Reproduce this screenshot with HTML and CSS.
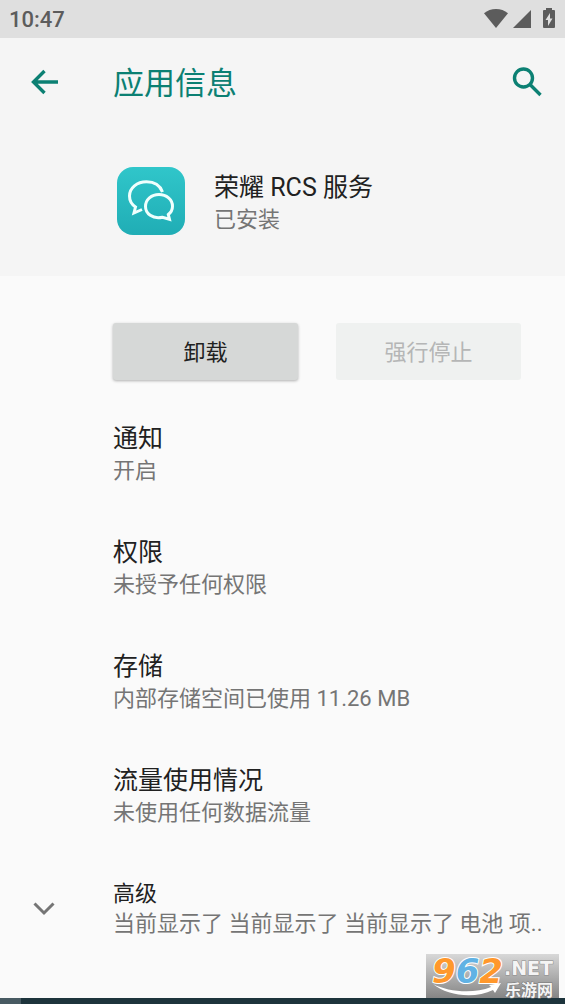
FILE: index.html
```html
<!DOCTYPE html>
<html lang="zh-CN">
<head>
<meta charset="utf-8">
<meta name="viewport" content="width=device-width, initial-scale=1">
<title>应用信息</title>
<link rel="stylesheet" href="styles.css">
</head>
<body>
<div class="status-bar">
  <span class="clock">10:47</span>
  <div class="status-icons">
    <svg width="24" height="20" viewBox="0 0 24 20" aria-hidden="true"><path d="M0 4.2C3.400 1.600 7.500 0 12 0s8.600 1.600 12 4.200L12 19z"/></svg>
    <svg width="18" height="18" viewBox="0 0 18 18" aria-hidden="true"><path d="M18 0v18H0z"/></svg>
    <svg class="battery" width="12" height="20" viewBox="0 0 12 20" aria-hidden="true"><path fill-rule="evenodd" d="M3 0h6v2h2q1 0 1 1v16q0 1-1 1H1q-1 0-1-1V3q0-1 1-1h2zM7 5L2.500 12H5v6L9.500 10.500H7z"/></svg>
  </div>
</div>
<header class="header">
  <div class="toolbar">
    <button class="icon-button" type="button" aria-label="返回">
      <svg width="28" height="26" viewBox="0 0 28 26" aria-hidden="true"><path d="M27 13H3M13.500 2L2.500 13l11 11"/></svg>
    </button>
    <h1 class="toolbar-title">应用信息</h1>
    <button class="icon-button" type="button" aria-label="搜索">
      <svg width="30" height="30" viewBox="0 0 30 30" aria-hidden="true"><circle cx="11.500" cy="11" r="9"/><path d="M18 17.500L28.500 28"/></svg>
    </button>
  </div>
  <div class="app">
    <svg class="app-icon" width="68" height="68" viewBox="0 0 68 68" aria-hidden="true">
      <defs><linearGradient id="teal" x1="0" y1="0" x2="0" y2="1"><stop offset="0" stop-color="#30c6ca"/><stop offset="1" stop-color="#20adb5"/></linearGradient></defs>
      <rect width="68" height="68" rx="16" fill="url(#teal)"/>
      <g fill="none" stroke="#f0fffd" stroke-width="3" stroke-linejoin="miter">
        <path d="M45.500 25C43 18.500 37 14.800 29.500 14.800C20 14.800 12.500 21 12.500 29C12.500 33.500 14.800 37.500 18.500 40L17 46L25 42.500"/>
        <path d="M52.500 52.300L45.500 50.200C35.500 52.500 28.500 46.500 28.500 39.500C28.500 32.500 34.500 27.500 42 27.500C49.500 27.500 55.500 32.500 55.500 39.200C55.500 42.500 54 45.400 51.300 47.500Z"/>
      </g>
    </svg>
    <div class="app-text">
      <h2 class="title">荣耀 RCS 服务</h2>
      <p class="summary">已安装</p>
    </div>
  </div>
</header>
<main class="content">
  <div class="actions">
    <button class="action" type="button">卸载</button>
    <button class="action" type="button" disabled>强行停止</button>
  </div>
  <ul class="list">
    <li class="item"><h2 class="title">通知</h2><p class="summary">开启</p></li>
    <li class="item"><h2 class="title">权限</h2><p class="summary">未授予任何权限</p></li>
    <li class="item"><h2 class="title">存储</h2><p class="summary">内部存储空间已使用 11.26 MB</p></li>
    <li class="item"><h2 class="title">流量使用情况</h2><p class="summary">未使用任何数据流量</p></li>
    <li class="item advanced">
      <svg class="chevron" width="22" height="14" viewBox="0 0 22 14" aria-hidden="true"><path d="M1.500 1.500L11 11l9.500-9.500"/></svg>
      <div class="advanced-text"><h2 class="title small">高级</h2><p class="summary">当前显示了 当前显示了 当前显示了 电池 项..</p></div>
    </li>
  </ul>
</main>
<footer class="strip"><div class="strip-start"></div></footer>
<div class="watermark">
  <span class="mark-number">9<span class="blue">6</span>2</span>
  <span class="mark-net">.NET</span>
  <span class="mark-name">乐游网</span>
  <svg class="swoosh" width="70" height="14" viewBox="0 0 70 14" aria-hidden="true"><path d="M1 1C16 9 42 11 59 4L57 2L69 0L63 10L61 7C43 16 15 13 1 1z"/></svg>
</div>
</body>
</html>
```

FILE: styles.css
```css
* { box-sizing: border-box; }
body {
  margin: 0;
  min-height: 100vh;
  display: flex;
  flex-direction: column;
  position: relative;
  background: #fafafa;
  color: #212121;
  font-family: Roboto, "Noto Sans CJK SC", sans-serif;
}
h1, h2, p, ul { margin: 0; padding: 0; font-weight: 400; }
ul { list-style: none; }
button { font: inherit; border: 0; padding: 0; }
svg { display: block; flex: none; }

.status-bar {
  display: flex;
  align-items: center;
  justify-content: space-between;
  height: 38px;
  padding: 0 10px 0 9px;
  background: #dfdfdf;
  color: #5c5c5c;
}
.clock { font-size: 22px; font-weight: 500; }
.status-icons { display: flex; align-items: center; gap: 5px; fill: #5c5c5c; }
.battery { margin: 0 0 2px 7px; }

.header { background: #f5f5f5; padding-bottom: 41px; }
.toolbar {
  display: flex;
  align-items: center;
  height: 87px;
  padding: 0 23px 0 31px;
  color: #0c8073;
}
.toolbar-title { flex: 1; padding: 0 0 3px 54px; font-size: 31px; }
.icon-button { background: none; color: inherit; }
.icon-button svg { fill: none; stroke: currentColor; stroke-width: 3.4; }

.app { display: flex; gap: 29px; padding: 42px 24px 0 117px; }
.title { font-size: 25px; line-height: 34px; }
.small { font-size: 22px; line-height: 30px; }
.summary {
  font-size: 22px;
  line-height: 30px;
  color: #757575;
  white-space: nowrap;
}
.app-text { padding-top: 4px; }

.content { flex: 1; padding-top: 47px; }
.actions {
  display: grid;
  grid-template-columns: 1fr 1fr;
  gap: 38px;
  padding: 0 44px 0 113px;
}
.action {
  height: 57px;
  padding-bottom: 4px;
  border-radius: 3px;
  background: #d6d8d7;
  color: #212121;
  font-size: 22px;
  box-shadow: 0 1px 3px rgba(0, 0, 0, 0.3);
}
.action:disabled { background: #eff1f0; color: #b5b6b6; box-shadow: none; }

.list { padding-top: 17px; }
.item { padding: 25px 20px 25px 113px; }
.advanced { display: flex; align-items: center; padding: 26px 20px 20px 33px; }
.advanced-text { padding-left: 58px; min-width: 0; }
.chevron { fill: none; stroke: #757575; stroke-width: 3; }

.strip { height: 6px; background: #1d343c; }
.strip-start { width: 21px; height: 100%; background: #485a62; }

.watermark {
  position: absolute;
  right: 6px;
  bottom: 6px;
  width: 133px;
  height: 44px;
  background: linear-gradient(#d8d8d8, #858585);
  color: #f4f4f4;
  font-family: "DejaVu Sans", "Noto Sans CJK SC", sans-serif;
  font-weight: 700;
  line-height: 1;
  paint-order: stroke fill;
}
.mark-number, .mark-net, .mark-name, .swoosh { position: absolute; }
.mark-number {
  left: 6px;
  top: 0;
  color: #ff982c;
  font-size: 34px;
  font-style: italic;
  -webkit-text-stroke: 2px #ffffff;
}
.blue { color: #61b2e4; }
.mark-net { left: 78px; top: 5px; font-size: 19px; -webkit-text-stroke: 1px #8a8a8a; }
.mark-name { right: 6px; bottom: 1px; font-family: "Noto Sans CJK SC", sans-serif; font-size: 16px; -webkit-text-stroke: 1px #777777; }
.swoosh { left: 6px; bottom: 1px; fill: #ffffff; }
```
